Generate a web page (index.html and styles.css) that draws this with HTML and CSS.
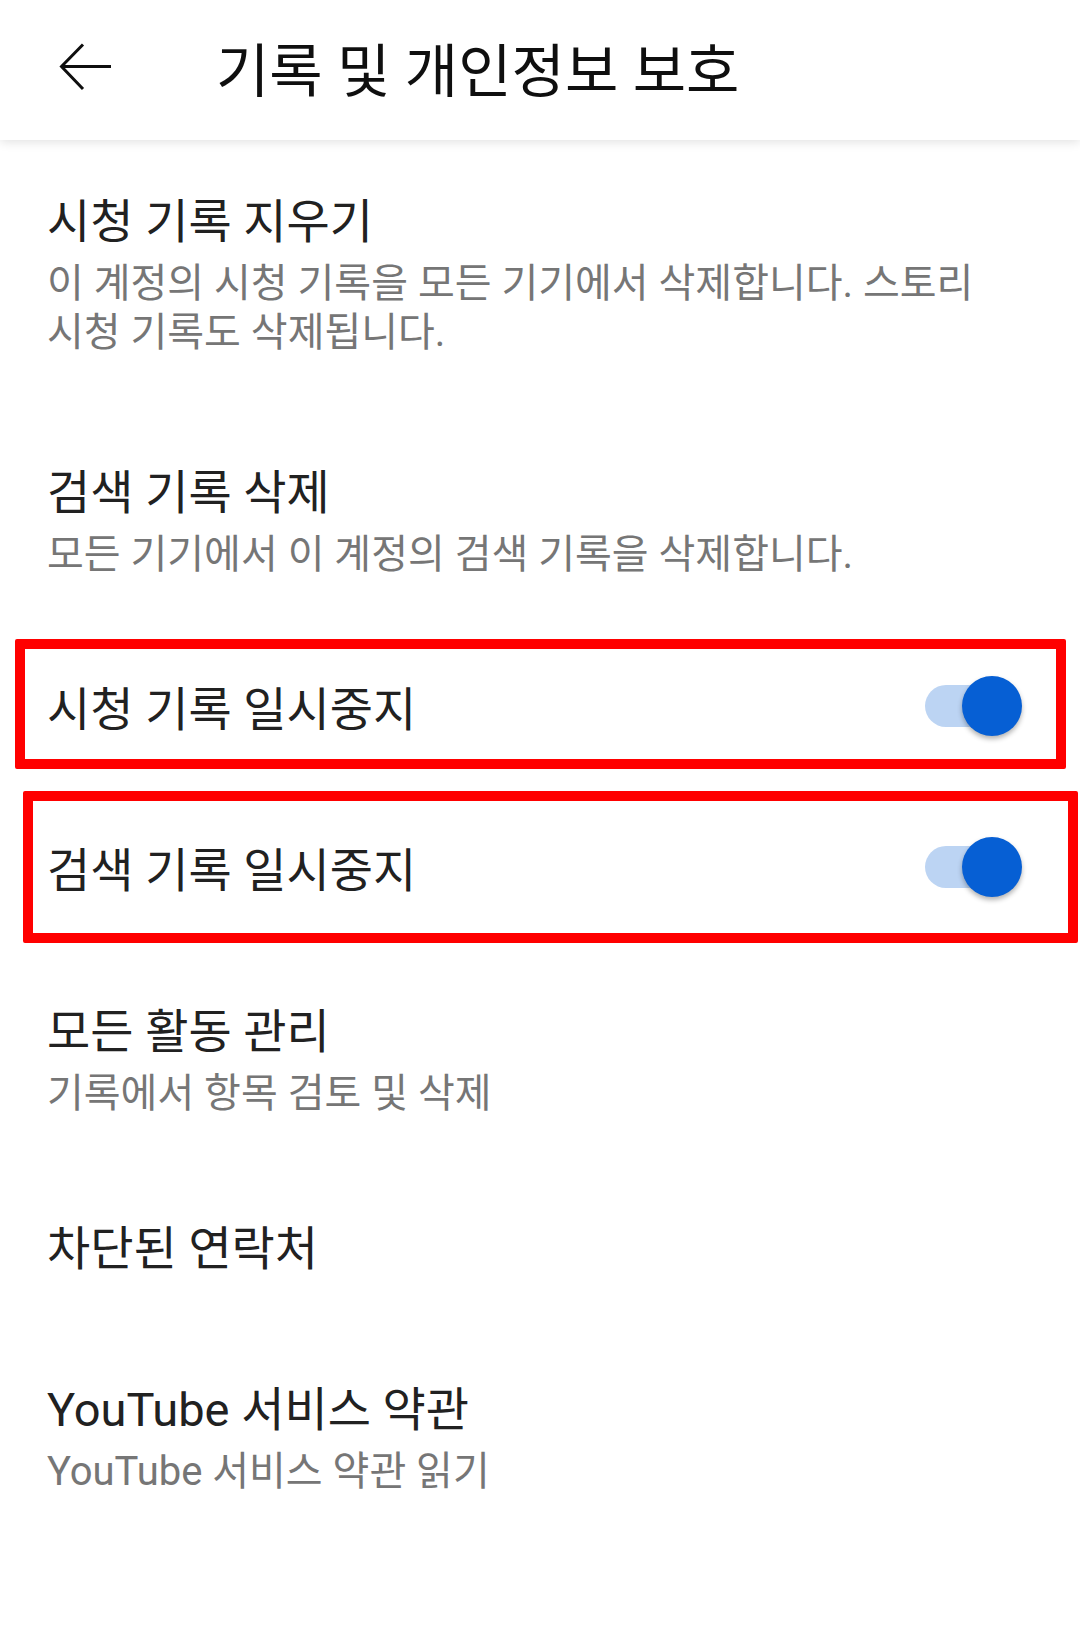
FILE: index.html
```html
<!DOCTYPE html>
<html lang="ko">

<head>
  <meta charset="UTF-8">
  <meta name="viewport" content="width=device-width, initial-scale=1.0">
  <title>기록 및 개인정보 보호</title>
  <link rel="stylesheet" href="styles.css">
</head>

<body>
  <header class="topbar">
    <svg class="back" viewBox="0 0 56 50" width="56" height="50">
      <path d="M53 24.5H4M25 2.5L3.5 24.5L25 47" fill="none" stroke="#0f0f0f" stroke-width="3" />
    </svg>
    <h1 class="title">기록 및 개인정보 보호</h1>
  </header>

  <div class="list">
    <div class="item item-first">
      <p class="name">시청 기록 지우기</p>
      <p class="desc">이 계정의 시청 기록을 모든 기기에서 삭제합니다. 스토리 시청 기록도 삭제됩니다.</p>
    </div>
    <div class="item">
      <p class="name">검색 기록 삭제</p>
      <p class="desc">모든 기기에서 이 계정의 검색 기록을 삭제합니다.</p>
    </div>
    <div class="item item-switch">
      <p class="name">시청 기록 일시중지</p>
      <span class="switch"><i class="track"></i><i class="thumb"></i></span>
      <span class="mark mark-1"></span>
    </div>
    <div class="item item-switch">
      <p class="name">검색 기록 일시중지</p>
      <span class="switch"><i class="track"></i><i class="thumb"></i></span>
      <span class="mark mark-2"></span>
    </div>
    <div class="item">
      <p class="name">모든 활동 관리</p>
      <p class="desc">기록에서 항목 검토 및 삭제</p>
    </div>
    <div class="item">
      <p class="name">차단된 연락처</p>
    </div>
    <div class="item">
      <p class="name">YouTube 서비스 약관</p>
      <p class="desc">YouTube 서비스 약관 읽기</p>
    </div>
  </div>
</body>

</html>
```

FILE: styles.css
```css
body {
  margin: 0;
  background: #fff;
  font-family: Roboto, "Noto Sans CJK KR", sans-serif;
  color: #212121;
}

p,
h1 {
  margin: 0;
}

.topbar {
  height: 140px;
  box-sizing: border-box;
  padding: 4px 0 0 58px;
  display: flex;
  align-items: center;
  gap: 102px;
  background: #fff;
  box-shadow: 0 2px 10px rgba(0, 0, 0, 0.12);
  position: relative;
  z-index: 1;
}

.topbar .back {
  display: block;
  flex: none;
  margin-bottom: 10px;
}

.topbar .title {
  font-size: 58px;
  font-weight: 400;
  line-height: 1;
  color: #0f0f0f;
}

.list {
  display: flex;
  flex-direction: column;
}

.item {
  padding: 56px 80px 45px 47px;
  position: relative;
}

.item-first {
  padding-top: 52px;
  padding-bottom: 50px;
}

.item .name {
  font-size: 47px;
  line-height: 60px;
}

.item .desc {
  margin-top: 7px;
  font-size: 40px;
  line-height: 49px;
  color: #767676;
  word-break: keep-all;
}

.item-switch {
  display: flex;
  align-items: flex-start;
  justify-content: space-between;
  padding-right: 58px;
}

.switch {
  position: relative;
  width: 97px;
  height: 60px;
  margin-top: -4px;
  flex: none;
}

.switch .track {
  position: absolute;
  left: 0;
  top: 9px;
  width: 90px;
  height: 42px;
  border-radius: 21px;
  background: #bcd4f3;
}

.switch .thumb {
  position: absolute;
  left: 37px;
  top: 0;
  width: 60px;
  height: 60px;
  border-radius: 50%;
  background: #065fd4;
  box-shadow: 0 3px 5px rgba(0, 0, 0, 0.3);
}

.mark {
  position: absolute;
  border: 10px solid #ff0000;
  border-radius: 2px;
  pointer-events: none;
}

.mark-1 {
  left: 15px;
  top: 15px;
  right: 14px;
  bottom: 16px;
}

.mark-2 {
  left: 23px;
  top: 6px;
  right: 2px;
  bottom: 3px;
}
```
